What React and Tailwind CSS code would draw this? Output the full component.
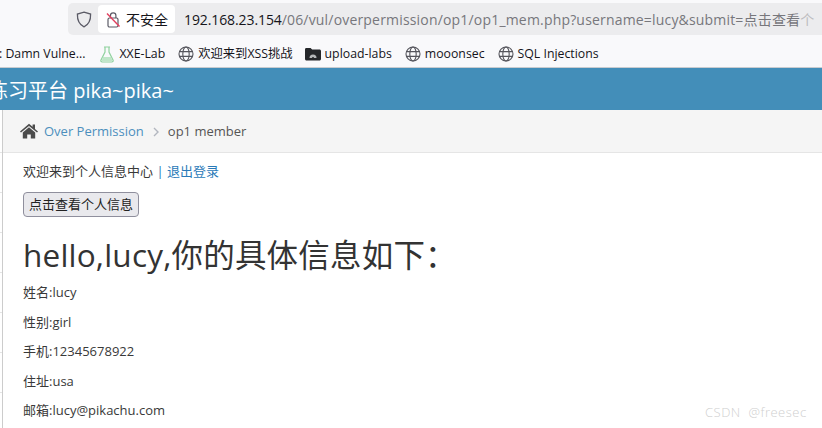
import React from "react";

const Globe = () => (
  <svg width="16" height="16" viewBox="0 0 16 16" fill="none" stroke="#55555c" strokeWidth="1.1" className="shrink-0">
    <circle cx="8" cy="8" r="7" />
    <ellipse cx="8" cy="8" rx="3.2" ry="7" />
    <path d="M1 5.6h14M1 10.4h14" />
  </svg>
);

const Flask = () => (
  <svg width="14" height="17" viewBox="0 0 14 17" fill="none" stroke="#8fd19e" strokeWidth="1.2" className="shrink-0">
    <path d="M4 1h6M5 1v5L1 14c-.5 1.2.2 2 1.3 2h9.4c1.100 0 1.800-.8 1.300-2L9 6V1" />
    <path d="M3 11h8l1.600 4H1.600z" fill="#bfe6c8" stroke="none" />
  </svg>
);

const Folder = () => (
  <svg width="16" height="14" viewBox="0 0 16 14" className="shrink-0">
    <path d="M0 2.500C0 1.400.8 1 1.600 1h4l1.500 1.500h7.300c.9 0 1.600.6 1.600 1.500v8c0 .9-.7 1.500-1.600 1.500H1.600C.7 13.500 0 12.900 0 12z" fill="#25272a" />
    <path d="M4.500 11a3.500 3.500 0 0 1 7 0z" fill="#b5b7b9" />
    <path d="M7 11a1 1 0 0 1 2 0z" fill="#25272a" />
  </svg>
);

const Bookmark = ({ icon, label, className }) => (
  <div className={`flex items-center gap-[4px] ${className}`}>
    {icon}
    <span className="whitespace-nowrap">{label}</span>
  </div>
);

const rows = ["姓名:lucy", "性别:girl", "手机:12345678922", "住址:usa", "邮箱:lucy@pikachu.com"];
const ticks = [0, 1, 2, 3, 4, 5, 6];

export default function App() {
  return (
    <div
      className="relative flex h-[428px] w-[822px] flex-col overflow-hidden bg-white text-[13px] text-[#393939]"
      style={{ fontFamily: '"Open Sans", "Noto Sans CJK SC", sans-serif' }}
    >
      {/* Address row */}
      <div className="flex h-[35px] shrink-0 items-center bg-[#f9f9fb] pt-[3px]">
        <div className="ml-[68px] flex h-[32px] min-w-0 flex-1 items-center overflow-hidden rounded-l-[5px] bg-[#ececee] pl-[8px]">
          <svg width="16" height="17" viewBox="0 0 16 17" fill="none" stroke="#5b5b66" strokeWidth="1.3" className="shrink-0">
            <path d="M8 1.200 14.600 3c.2 6-1.600 10.400-6.600 12.800C3 13.400 1.200 9 1.400 3z" />
          </svg>
          <div className="ml-[6px] flex h-[28px] w-[77px] shrink-0 items-center rounded-[4px] bg-white pl-[8px]">
            <svg width="15" height="17" viewBox="0 0 15 17" fill="none" className="shrink-0">
              <rect x="2" y="7" width="10" height="9" rx="1.500" stroke="#5b5b66" strokeWidth="1.200" />
              <path d="M4.500 7V4.500a2.700 2.700 0 0 1 5.400 0V7" stroke="#5b5b66" strokeWidth="1.200" />
              <path d="M1 2.500 13.500 15.500" stroke="#e2405f" strokeWidth="1.400" />
            </svg>
            <span className="ml-[5px] whitespace-nowrap text-[14px] text-[#15141a]">不安全</span>
          </div>
          <div className="ml-[9px] whitespace-nowrap text-[14px] tracking-[0.18px] text-[#77777c]">
            <span className="tracking-[-0.1px] text-[#15141a]">192.168.23.154</span>/06/vul/overpermission/op1/op1_mem.php?username=lucy&amp;submit=点击查看<span className="text-[#bcbcc0]">个</span>
          </div>
        </div>
      </div>

      {/* Bookmarks */}
      <div className="flex h-[33px] shrink-0 items-center overflow-hidden border-b border-[#c9ccd0] bg-[#f9f9fb] pt-[6px] text-[12.3px] text-[#15141a]">
        <Bookmark label=": Damn Vulne..." className="-ml-[1px]" icon={null} />
        <Bookmark label="XXE-Lab" className="ml-[15px] gap-[5px]" icon={<Flask />} />
        <Bookmark label="欢迎来到XSS挑战" className="ml-[13px]" icon={<Globe />} />
        <Bookmark label="upload-labs" className="ml-[12px]" icon={<Folder />} />
        <Bookmark label="mooonsec" className="ml-[13px]" icon={<Globe />} />
        <Bookmark label="SQL Injections" className="ml-[13px]" icon={<Globe />} />
      </div>

      {/* Site header */}
      <div className="flex h-[42px] shrink-0 items-center overflow-hidden bg-[#438eb9] pt-[4px] text-[20px] whitespace-nowrap text-white">
        <span className="-ml-[12px]">练习平台 pika~pika~</span>
      </div>

      {/* Body */}
      <div className="flex min-h-0 flex-1">
        <div className="w-[3px] shrink-0 border-r border-[#cccccc]">
          <div className="h-[43px] border-b border-[#e5e5e5]" />
          {ticks.map((t) => (
            <div key={t} className="h-[40px] border-b border-[#e5e5e5]" />
          ))}
        </div>
        <div className="min-w-0 flex-1">
          <div className="flex h-[43px] items-center border-b border-[#e5e5e5] bg-[#f5f5f5] pt-[2px] pl-[17px]">
            <svg width="18" height="16" viewBox="0 0 18 16" className="mb-[2px] shrink-0" fill="#4c4c4c">
              <path d="M9 .8 0 8.400l1 1.200L9 2.900l8 6.700 1-1.200-3-2.500V1.500h-2.400v2.300z" />
              <path d="M9 4.300 2.800 9.500V15.500h4.400v-4h3.600v4h4.400V9.500z" />
            </svg>
            <span className="ml-[6px] text-[#4c8fbd]">Over Permission</span>
            <svg width="6" height="10" viewBox="0 0 6 10" fill="none" stroke="#b2b6bf" strokeWidth="1.400" className="ml-[9px] shrink-0">
              <path d="M1 1l4 4-4 4" />
            </svg>
            <span className="ml-[9px] text-[#555555]">op1 member</span>
          </div>

          <div className="pl-[20px]">
            <div className="mt-[9px] h-[19px] leading-[19px]">
              欢迎来到个人信息中心 <span className="text-[#2a7ab8]">| 退出登录</span>
            </div>
            <button className="mt-[11px] block h-[25px] w-[116px] rounded-[4px] border border-[#8f8f9d] bg-[#e9e9ed] text-center text-[13px] leading-none text-[#222222]">
              点击查看个人信息
            </button>
            <h1 className="mt-[18px] h-[40px] text-[31.5px] leading-[40px] tracking-[0.2px] whitespace-nowrap text-[#333333]">hello,lucy,你的具体信息如下：</h1>
            <div className="mt-[7px] flex flex-col gap-[9.5px]">
              {rows.map((r) => (
                <div key={r} className="h-[20px] leading-[20px]">{r}</div>
              ))}
            </div>
          </div>
        </div>
      </div>

      <div className="absolute top-[403px] left-[705px] text-[13px] font-light tracking-[0.5px] whitespace-nowrap text-[#cfcfcf]">CSDN&nbsp; @freesec</div>
    </div>
  );
}
